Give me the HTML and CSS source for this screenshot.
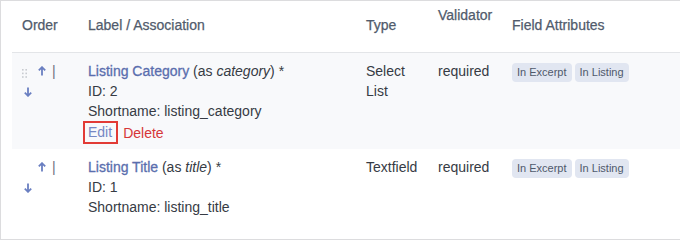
FILE: index.html
```html
<!DOCTYPE html>
<html lang="en">
<head>
<meta charset="utf-8">
<link rel="stylesheet" href="styles.css">
</head>
<body>
<div class="panel">
  <table class="fields">
    <colgroup>
      <col class="c-order"><col class="c-label"><col class="c-type"><col class="c-valid"><col class="c-attr">
    </colgroup>
    <thead>
      <tr>
        <th>Order</th>
        <th>Label / Association</th>
        <th>Type</th>
        <th class="th-valid">Validator</th>
        <th>Field Attributes</th>
      </tr>
    </thead>
    <tbody>
      <tr class="row alt">
        <td>
          <div class="order-line">
            <svg class="handle" width="6" height="10" viewBox="0 0 6 10"><g fill="#c8cbd0"><rect x="0" y="0" width="1.6" height="1.6"/><rect x="3.4" y="0" width="1.6" height="1.6"/><rect x="0" y="3.6" width="1.6" height="1.6"/><rect x="3.4" y="3.6" width="1.6" height="1.6"/><rect x="0" y="7.2" width="1.6" height="1.6"/><rect x="3.4" y="7.2" width="1.6" height="1.6"/></g></svg>
            <a class="arrow up" href="#"><svg width="8" height="10" viewBox="0 0 8 10"><path d="M4 9.5V1.2M0.8 4.4L4 1.2L7.2 4.4" fill="none" stroke="#6a7fc1" stroke-width="1.8"/></svg></a>
            <span class="sep">|</span>
          </div>
          <div class="order-line"><a class="arrow down" href="#"><svg width="8" height="10" viewBox="0 0 8 10"><path d="M4 0.5V8.8M0.8 5.6L4 8.8L7.2 5.6" fill="none" stroke="#6a7fc1" stroke-width="1.8"/></svg></a></div>
        </td>
        <td>
          <div><a class="name" href="#">Listing Category</a> (as <em>category</em>) *</div>
          <div>ID: 2</div>
          <div>Shortname: listing_category</div>
          <div class="actions"><a class="edit" href="#">Edit</a><a class="delete" href="#">Delete</a></div>
        </td>
        <td>Select List</td>
        <td>required</td>
        <td><span class="badge">In Excerpt</span><span class="badge">In Listing</span></td>
      </tr>
      <tr class="row last">
        <td>
          <div class="order-line">
            <svg class="handle hidden" width="6" height="10" viewBox="0 0 6 10"><g fill="#c8cbd0"><rect x="0" y="0" width="1.6" height="1.6"/></g></svg>
            <a class="arrow up" href="#"><svg width="8" height="10" viewBox="0 0 8 10"><path d="M4 9.5V1.2M0.8 4.4L4 1.2L7.2 4.4" fill="none" stroke="#6a7fc1" stroke-width="1.8"/></svg></a>
            <span class="sep">|</span>
          </div>
          <div class="order-line"><a class="arrow down" href="#"><svg width="8" height="10" viewBox="0 0 8 10"><path d="M4 0.5V8.8M0.8 5.6L4 8.8L7.2 5.6" fill="none" stroke="#6a7fc1" stroke-width="1.8"/></svg></a></div>
        </td>
        <td>
          <div><a class="name" href="#">Listing Title</a> (as <em>title</em>) *</div>
          <div>ID: 1</div>
          <div>Shortname: listing_title</div>
        </td>
        <td>Textfield</td>
        <td>required</td>
        <td><span class="badge">In Excerpt</span><span class="badge">In Listing</span></td>
      </tr>
    </tbody>
  </table>
</div>
</body>
</html>
```

FILE: styles.css
```css
html, body {
  margin: 0;
  padding: 0;
  background: #ffffff;
}

body {
  font-family: "Liberation Sans", Arial, sans-serif;
  font-size: 14px;
  line-height: 20px;
  color: #363b44;
}

.panel {
  border: 1px solid #dcdcde;
  border-right: none;
  padding-left: 11px;
}

.fields {
  border-collapse: collapse;
  table-layout: fixed;
  width: 100%;
}

.c-order { width: 66px; }
.c-label { width: 278px; }
.c-type { width: 72px; }
.c-valid { width: 74px; }

.fields th {
  text-align: left;
  font-weight: normal;
  color: #515b6c;
  -webkit-text-stroke: 0.25px #515b6c;
  vertical-align: top;
  padding: 14px 0 16px 10px;
  border-bottom: 1px solid #e3e5e8;
  height: 21px;
}

.fields th.th-valid {
  padding-top: 4px;
}

.fields td {
  vertical-align: top;
  padding: 8px 0 5px 10px;
}

.row.alt td {
  background: #f8f9fb;
}

.row.last td {
  padding-bottom: 22px;
}

.order-line {
  display: flex;
  align-items: center;
  height: 20px;
}

.handle {
  margin-top: 6px;
}

.handle.hidden {
  visibility: hidden;
}

.arrow {
  display: flex;
}

.arrow.up {
  margin-left: 10px;
  margin-top: -1px;
}

.arrow.down {
  margin-left: 2px;
  margin-top: 1px;
}

.sep {
  margin-left: 6px;
  color: #6b7280;
  line-height: 20px;
}

a.name {
  color: #5a6eae;
  -webkit-text-stroke: 0.3px #5a6eae;
  text-decoration: none;
}

.actions {
  display: flex;
  align-items: center;
  height: 23px;
  margin-left: -5px;
}

.actions a {
  text-decoration: none;
}

.edit {
  color: #7587c4;
  border: 2px solid #e23b36;
  padding: 0 4px 0 3px;
  line-height: 19px;
}

.delete {
  color: #d63638;
  margin-left: 5px;
}

.badge {
  display: inline-block;
  background: #e1e6f1;
  color: #4f596b;
  font-size: 11px;
  line-height: 19px;
  height: 19px;
  padding: 0 5px;
  border-radius: 4px;
  margin-right: 3px;
}
```
